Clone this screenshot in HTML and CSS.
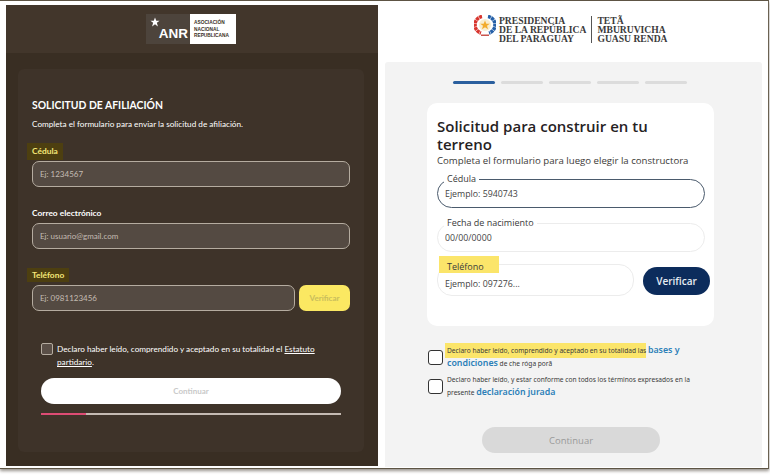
FILE: index.html
```html
<!DOCTYPE html>
<html lang="es">
<head>
    <meta charset="UTF-8">
    <meta name="viewport" content="width=device-width, initial-scale=1.0">
    <title>Solicitud de afiliación</title>
    <link rel="stylesheet" href="styles.css">
</head>
<body>
    <div class="sheet">
        <!-- Formulario ANR -->
        <section class="anr">
            <header class="anr-header">
                <div class="anr-logo">
                    <div class="anr-mark">
                        <svg class="anr-star" viewBox="0 0 24 24"><path d="M12 1l3 8h8l-6.500 5 2.500 9-7-5.500L5 23l2.500-9L1 9h8z"/></svg>
                        <span>ANR</span>
                    </div>
                    <div class="anr-name">ASOCIACIÓN<br>NACIONAL<br>REPUBLICANA</div>
                </div>
            </header>
            <form class="anr-card">
                <h2>SOLICITUD DE AFILIACIÓN</h2>
                <p class="anr-sub">Completa el formulario para enviar la solicitud de afiliación.</p>

                <label class="anr-label mark-cedula">Cédula</label>
                <input class="anr-input" type="text" placeholder="Ej: 1234567">

                <label class="anr-label">Correo electrónico</label>
                <input class="anr-input" type="text" placeholder="Ej: usuario@gmail.com">

                <label class="anr-label mark-telefono">Teléfono</label>
                <div class="anr-phone">
                    <input class="anr-input" type="text" placeholder="Ej: 0981123456">
                    <button class="anr-verify" type="button">Verificar</button>
                </div>

                <div class="anr-bottom">
                    <div class="anr-check">
                        <span class="anr-box"></span>
                        <p>Declaro haber leído, comprendido y aceptado en su totalidad el <u>Estatuto</u> <u>partidario</u>.</p>
                    </div>
                    <button class="anr-next" type="button">Continuar</button>
                    <div class="anr-progress"><div class="anr-bar"></div></div>
                </div>
            </form>
        </section>

        <!-- Formulario Presidencia -->
        <section class="gov">
            <header class="gov-header">
                <svg class="gov-emblem" viewBox="0 0 22 22">
                    <circle cx="11" cy="10" r="6" fill="#f8edd0"/>
                    <path class="wreath" d="M8 1.500A8.500 8.500 0 0 0 7 18" stroke="#d8352e"/>
                    <path class="wreath" d="M14 1.500A8.500 8.500 0 0 1 15 18" stroke="#2560a8"/>
                    <path d="M11 5.500l1.300 3.200h3.500l-2.800 2.100 1 3.400-3-2-3 2 1-3.400-2.800-2.100h3.500z" fill="#f2ab2c"/>
                    <path d="M7 19.500h8V21H7z" fill="#c9554e"/>
                </svg>
                <div class="gov-name">PRESIDENCIA<br>DE LA REPÚBLICA<br>DEL PARAGUAY</div>
                <div class="gov-name gov-name-gn">TETÃ<br>MBURUVICHA<br>GUASU RENDA</div>
            </header>
            <div class="gov-body">
                <div class="steps">
                    <span class="step step-on"></span>
                    <span class="step"></span>
                    <span class="step"></span>
                    <span class="step"></span>
                    <span class="step"></span>
                </div>
                <form class="gov-card">
                    <h1>Solicitud para construir en tu terreno</h1>
                    <p class="gov-sub">Completa el formulario para luego elegir la constructora</p>

                    <fieldset class="field field-focus">
                        <legend>Cédula</legend>
                        <input type="text" placeholder="Ejemplo: 5940743">
                    </fieldset>
                    <fieldset class="field">
                        <legend>Fecha de nacimiento</legend>
                        <input type="text" placeholder="00/00/0000">
                    </fieldset>
                    <div class="gov-phone">
                        <fieldset class="field field-phone">
                            <legend class="legend-mark">Teléfono</legend>
                            <input type="text" placeholder="Ejemplo: 097276...">
                        </fieldset>
                        <button class="gov-verify" type="button">Verificar</button>
                    </div>
                </form>

                <div class="terms">
                    <div class="term">
                        <span class="term-box"></span>
                        <p><mark>Declaro haber leído, comprendido y aceptado en su totalidad las</mark> <a>bases y</a> <a>condiciones</a> de che róga porã</p>
                    </div>
                    <div class="term">
                        <span class="term-box"></span>
                        <p>Declaro haber leído, y estar conforme con todos los términos expresados en la presente <a>declaración jurada</a></p>
                    </div>
                </div>
                <button class="gov-next" type="button">Continuar</button>
            </div>
        </section>
    </div>
</body>
</html>
```

FILE: styles.css
```css
* {
    margin: 0;
    padding: 0;
    box-sizing: border-box;
}

html, body {
    height: 100%;
    overflow: hidden;
}

body {
    background: #fff;
    font-family: "Noto Sans", sans-serif;
}

.sheet {
    display: flex;
    width: 769px;
    height: 469px;
    padding: 4px 6px 0 6px;
    gap: 7px;
    background: #fff;
    border-top: 1px solid #5d5444;
    border-right: 1px solid #6b6252;
    border-bottom: 1px solid #5d5444;
    box-shadow: 0 2px 3px rgba(70, 60, 50, 0.55);
}

/* Panel izquierdo */
.anr {
    width: 372px;
    height: 461px;
    flex: none;
    background: #392e23;
    color: #fff;
    font-family: Lato, sans-serif;
}

.anr-header {
    height: 48px;
    padding-top: 9px;
    display: flex;
    justify-content: center;
    background: #42362b;
}

.anr-logo {
    display: flex;
    height: 30px;
    margin-right: 2px;
}

.anr-mark {
    width: 44px;
    padding: 3px 2px 0 4px;
    background: #4d443c;
    display: flex;
    flex-direction: column;
    align-items: flex-end;
    font-family: "Liberation Sans", sans-serif;
    font-weight: 700;
    font-size: 13.500px;
    line-height: 14px;
}

.anr-star {
    width: 10px;
    height: 10px;
    fill: #fff;
    align-self: flex-start;
}

.anr-name {
    width: 46px;
    padding: 6px 0 0 4px;
    background: #fff;
    color: #3a2f24;
    font-family: "Liberation Sans", sans-serif;
    font-size: 4.800px;
    font-weight: 700;
    line-height: 6.500px;
    white-space: nowrap;
}

.anr-card {
    height: 383px;
    margin: 16px 14px 0 12px;
    padding: 29px 13px 0 14px;
    background: #3e3329;
    border-radius: 6px;
}

.anr-card h2 {
    font-size: 10.400px;
    font-weight: 700;
    line-height: 14px;
}

.anr-sub {
    margin-top: 6px;
    font-size: 8.200px;
    line-height: 12px;
}

.anr-label {
    display: block;
    width: fit-content;
    font-size: 8.400px;
    font-weight: 700;
    line-height: 12px;
    margin-top: 20px;
    margin-bottom: 4px;
}

.mark-cedula,
.mark-telefono {
    margin-left: -5px;
    padding: 2px 5px 3px;
    background: #4d3f10;
    color: #f5e878;
}

.mark-cedula {
    margin-top: 13px;
    margin-bottom: 1px;
}

.mark-telefono {
    margin-top: 19px;
    margin-bottom: 3px;
    padding: 1px 5px 1px;
}

.anr-input {
    display: block;
    width: 318px;
    height: 26px;
    padding: 0 7px;
    background: #544a42;
    border: 1px solid #b5aca0;
    border-radius: 7px;
    font-family: Lato, sans-serif;
    font-size: 8px;
    color: #fff;
}

.anr-input::placeholder {
    color: #c4bcb3;
    opacity: 1;
}

.anr-phone {
    display: flex;
    gap: 4px;
}

.anr-phone .anr-input {
    width: 263px;
}

.anr-verify {
    width: 51px;
    height: 26px;
    border: none;
    border-radius: 7px;
    background: #fbe862;
    color: #c9bd5c;
    font-family: Lato, sans-serif;
    font-size: 8px;
    font-weight: 700;
}

.anr-bottom {
    padding: 0 9px;
}

.anr-check {
    display: flex;
    gap: 4px;
    margin-top: 32px;
}

.anr-box {
    width: 12px;
    height: 12px;
    flex: none;
    background: #5a4f47;
    border: 1px solid #b5aca0;
    border-radius: 2px;
}

.anr-check p {
    width: 265px;
    font-size: 8.200px;
    line-height: 13px;
}

.anr-next {
    display: block;
    width: 300px;
    height: 26px;
    margin-top: 9px;
    border: none;
    border-radius: 13px;
    background: #fff;
    color: #c9c9c9;
    font-family: Lato, sans-serif;
    font-size: 8px;
    font-weight: 700;
}

.anr-progress {
    width: 300px;
    height: 2px;
    margin-top: 9px;
    background: #c4bab2;
}

.anr-bar {
    width: 15%;
    height: 100%;
    background: #dd4c74;
}

/* Panel derecho */
.gov {
    width: 377px;
    flex: none;
    color: #26221f;
}

.gov-header {
    height: 57px;
    padding: 10px 0 0 89px;
    display: flex;
    background: #fff;
}

.gov-emblem {
    width: 22px;
    height: 22px;
    flex: none;
}

.wreath {
    fill: none;
    stroke-width: 3.600;
    stroke-dasharray: 3 0.500;
}

.gov-name {
    margin: 1px 0 0 3px;
    padding-right: 5px;
    font-family: "Liberation Serif", serif;
    font-size: 9.600px;
    font-weight: 700;
    line-height: 9px;
    color: #3a3a3a;
    white-space: nowrap;
}

.gov-name-gn {
    height: 27px;
    margin-left: 0;
    padding: 0 0 0 5px;
    border-left: 1px solid #555;
}

.gov-body {
    height: 405px;
    padding-top: 19px;
    background: #f3f3f3;
    border-radius: 3px 3px 0 0;
}

.steps {
    display: flex;
    gap: 6px;
    margin-left: 68px;
}

.step {
    width: 42px;
    height: 3px;
    background: #dcdcdc;
    border-radius: 2px;
}

.step-on {
    background: #2a5f9e;
}

.gov-card {
    width: 287px;
    height: 223px;
    margin: 19px 0 0 42px;
    padding: 14px 9px 0 10px;
    background: #fff;
    border-radius: 10px;
}

.gov-card h1 {
    font-family: "Open Sans", sans-serif;
    font-size: 15px;
    font-weight: 600;
    line-height: 18px;
    color: #26221f;
}

.gov-sub {
    font-family: "Open Sans", sans-serif;
    font-size: 9.650px;
    line-height: 16px;
    white-space: nowrap;
    color: #3c3a38;
}

.field {
    display: block;
    width: 268px;
    height: 35px;
    margin-top: 9px;
    padding: 0 9px;
    border: 1px solid #ececec;
    border-radius: 15px;
}

.field-focus {
    margin-top: 4px;
    border: 1.500px solid #4a5a6c;
}

.field legend {
    margin-left: -3px;
    padding: 0 3px;
    font-family: "Open Sans", sans-serif;
    font-size: 9px;
    line-height: 12px;
    color: #3a3a3a;
}

.field legend.legend-mark {
    margin: 0 0 5px -8px;
    padding: 5px 15px 0 8px;
    background: #fbe56a;
}

.field input {
    display: block;
    width: 100%;
    height: 20px;
    margin: -1px 0 0 -2px;
    border: none;
    outline: none;
    background: transparent;
    font-family: "Open Sans", sans-serif;
    font-size: 8.800px;
}

.field input::placeholder {
    color: #444;
    opacity: 1;
}

.gov-phone {
    display: flex;
    align-items: flex-end;
    gap: 9px;
    margin-top: 4px;
}

.field-phone {
    flex: none;
    width: 197px;
    height: 40px;
    margin-top: 0;
}

.field-phone input {
    margin-top: -4px;
}

.gov-verify {
    flex: none;
    width: 67px;
    height: 28px;
    margin-bottom: 1px;
    border: none;
    border-radius: 14px;
    background: #0c2c5c;
    color: #e8edf3;
    font-family: "Open Sans", sans-serif;
    font-size: 10px;
    font-weight: 600;
}

.terms {
    margin: 19px 0 0 43px;
}

.term {
    display: flex;
    align-items: center;
    gap: 4px;
    margin-bottom: 4px;
}

.term-box {
    width: 15px;
    height: 15px;
    flex: none;
    background: #fff;
    border: 1.500px solid #333;
    border-radius: 3px;
}

.term p {
    width: 250px;
    font-size: 6.600px;
    line-height: 12.500px;
    color: #3a3a3a;
}

.term mark {
    background: #fbe56a;
    color: #3a3a3a;
    margin-left: -2px;
    padding: 3px 0 3px 2px;
}

.term a {
    font-size: 8.800px;
    font-weight: 600;
    line-height: 10px;
    color: #2b7fb8;
}

.gov-next {
    display: block;
    width: 178px;
    height: 26px;
    margin: 28px 0 0 97px;
    border: none;
    border-radius: 13px;
    background: #d9d9d9;
    color: #9a9a9a;
    font-family: "Open Sans", sans-serif;
    font-size: 9.500px;
}
```
